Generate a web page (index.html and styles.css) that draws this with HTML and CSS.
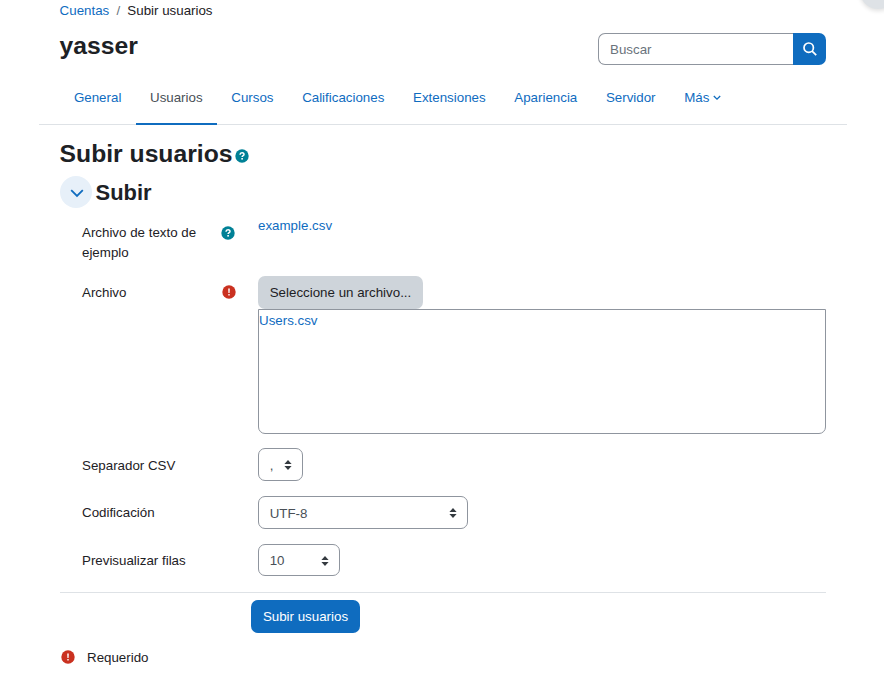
FILE: index.html
```html
<!DOCTYPE html>
<html lang="es">
<head>
<meta charset="utf-8">
<title>Subir usuarios</title>
<link rel="stylesheet" href="styles.css">
</head>
<body>
<svg class="defs" width="0" height="0">
  <symbol id="help" viewBox="0 0 14 14"><circle cx="7" cy="7" r="6.7" fill="#008196"/><path d="M5 5.7C5.1 3.3 9 3.3 9 5.4C9 6.7 7.1 6.5 7.1 8.1" fill="none" stroke="#fff" stroke-width="1.5"/><rect x="6.3" y="9" width="1.6" height="1.6" fill="#fff"/></symbol>
  <symbol id="required" viewBox="0 0 14 14"><circle cx="7" cy="7" r="6.7" fill="#ca3120"/><path d="M6.2 3.5h1.6l-.2 4.6H6.4z" fill="#fff"/><rect x="6.3" y="9" width="1.4" height="1.5" fill="#fff"/></symbol>
  <symbol id="sort" viewBox="0 0 8 10"><path d="M.4 4L4 0l3.6 4zM.4 6L4 10l3.6-4z" fill="#343a40"/></symbol>
</svg>
<div class="drawer-toggle"></div>
<main class="page">
  <nav class="breadcrumb"><a href="#">Cuentas</a><span class="slash">/</span><span>Subir usuarios</span></nav>
  <header class="header">
    <h1 class="site">yasser</h1>
    <form class="search">
      <input class="search-input" type="text" placeholder="Buscar">
      <button class="search-button" type="button" aria-label="Buscar"><svg width="14" height="14" viewBox="0 0 14 14" fill="none" stroke="#fff" stroke-width="1.7"><circle cx="5.7" cy="5.7" r="4.7"/><path d="M9.1 9.1l4.1 4.1"/></svg></button>
    </form>
  </header>
  <nav class="tabs">
    <a href="#">General</a><a class="active" href="#">Usuarios</a><a href="#">Cursos</a><a href="#">Calificaciones</a><a href="#">Extensiones</a><a href="#">Apariencia</a><a href="#">Servidor</a><a href="#">Más<svg class="caret" width="8" height="6" viewBox="0 0 8 6" fill="none" stroke="#0f6cbf" stroke-width="1.3"><path d="M.8 1L4 4.2 7.2 1"/></svg></a>
  </nav>
  <h2 class="title">Subir usuarios<svg class="icon"><use href="#help"/></svg></h2>
  <div class="section">
    <span class="collapse"><svg width="14" height="9" viewBox="0 0 14 9" fill="none" stroke="#0f6cbf" stroke-width="1.8"><path d="M1.2 1.2L7 7l5.8-5.8"/></svg></span>
    <h3>Subir</h3>
  </div>
  <div class="row example">
    <div class="label"><span>Archivo de texto de ejemplo</span><svg class="icon"><use href="#help"/></svg></div>
    <div class="field"><a href="#">example.csv</a></div>
  </div>
  <div class="row file">
    <div class="label"><span>Archivo</span><svg class="icon"><use href="#required"/></svg></div>
    <div class="field"><button class="choose" type="button">Seleccione un archivo...</button><div class="dropzone"><a href="#">Users.csv</a></div></div>
  </div>
  <div class="row separator">
    <div class="label">Separador CSV</div>
    <div class="select">,<svg class="sort"><use href="#sort"/></svg></div>
  </div>
  <div class="row encoding">
    <div class="label">Codificación</div>
    <div class="select">UTF-8<svg class="sort"><use href="#sort"/></svg></div>
  </div>
  <div class="row preview">
    <div class="label">Previsualizar filas</div>
    <div class="select">10<svg class="sort"><use href="#sort"/></svg></div>
  </div>
  <div class="actions"><button class="submit" type="button">Subir usuarios</button></div>
  <div class="legend"><svg class="icon"><use href="#required"/></svg>Requerido</div>
</main>
</body>
</html>
```
FILE: styles.css
```css
* { box-sizing: border-box; }
body { margin: 0; height: 690px; overflow: hidden; background: #fff; color: #1d2125; font: 13.34px/20px "Liberation Sans", Arial, sans-serif; }
a { color: #0f6cbf; text-decoration: none; }
h1, h2, h3 { margin: 0; font-weight: 700; }
button { font: inherit; border: 0; border-radius: 7px; padding: 0; }
.defs { display: block; height: 0; }
.drawer-toggle { position: absolute; top: -27px; left: 860px; width: 36px; height: 36px; border-radius: 50%; background: #dee2e6; box-shadow: 0 2px 4px rgba(0, 0, 0, .12); }
.page { width: 766px; margin-left: 60px; }
.breadcrumb { height: 33px; padding-top: 1px; margin-left: -.4px; }
.slash { color: #6a737b; padding: 0 7.2px; }
.header { display: flex; justify-content: space-between; height: 38px; }
.site { font-size: 24.7px; line-height: 25px; margin-left: -.4px; }
.search { display: flex; width: 228px; height: 32px; }
.search-input { width: 195px; border: 1px solid #8f959e; border-right: 0; border-radius: 7px 0 0 7px; padding: 1px 11px 0; font: inherit; outline: 0; }
.search-input::placeholder { color: #6a737b; opacity: 1; }
.search-button { width: 33px; border-radius: 0 7px 7px 0; background: #0f6cbf; display: grid; place-items: center; }
.tabs { display: flex; height: 54px; margin: 0 -21px; padding-left: 20.6px; border-bottom: 1px solid #dee2e6; }
.tabs a { height: 54px; padding: 17px 14.34px 0; border-bottom: 2px solid transparent; }
.tabs .active { color: #495057; border-color: #0f6cbf; }
.caret { margin-left: 4px; vertical-align: 1px; }
.icon { width: 14px; height: 14px; flex: none; }
.title { display: flex; align-items: center; height: 31px; margin-top: 13px; margin-left: -.4px; font-size: 24.7px; gap: 3px; }
.title .icon { margin-top: 5px; }
.section { display: flex; align-items: center; gap: 4px; height: 32px; margin-top: 7px; }
.section h3 { font-size: 21.9px; padding-top: 1px; margin-left: -.4px; }
.collapse { display: grid; place-items: center; width: 32px; height: 32px; border-radius: 50%; background: #e7f0f9; padding: 3px 0 0 1px; }
.row { display: grid; grid-template-columns: 154px 568px; column-gap: 22px; margin-left: 22px; }
.label { display: flex; justify-content: space-between; align-items: flex-start; }
.label span { width: 120px; }
.label .icon { margin-top: 3px; }
.example { margin-top: 8px; height: 60px; }
.example .label { padding-top: 7px; }
.example .icon { margin-right: .6px; }
.file { height: 158px; }
.file .label { padding-top: 7px; }
.file .icon { margin-top: 2px; }
.choose { display: block; width: 165px; height: 33px; padding: 1px 0 0; background: #ced4da; color: #1d2125; }
.dropzone { height: 125px; padding-top: 1px; border: 1px solid #8f959e; border-radius: 0 0 7px 7px; }
.select { display: flex; align-items: center; justify-content: space-between; padding: 3px 11px 1px 10.7px; height: 33px; border: 1px solid #8f959e; border-radius: 7px; color: #495057; }
.sort { width: 8px; height: 10px; margin: -2px -.5px 0 0; }
.separator, .encoding { height: 33px; margin-top: 14px; }
.encoding, .preview { margin-top: 15px; }
.separator .label { padding-top: 8px; }
.encoding .label, .preview .label { padding-top: 7px; }
.separator .select { width: 45px; }
.encoding .select { width: 210px; }
.preview .select { width: 82px; height: 32px; }
.preview .sort { margin-top: -1px; }
.actions { margin-top: 16px; border-top: 1px solid #dee2e6; padding: 7px 0 0 191px; }
.submit { display: block; width: 109px; height: 33px; padding: 1px 0 0; background: #0f6cbf; color: #fff; }
.legend { display: flex; align-items: center; gap: 12px; margin: 15px 0 0 1px; }
.legend .icon { margin: -2px .4px 0 -.4px; }
```
